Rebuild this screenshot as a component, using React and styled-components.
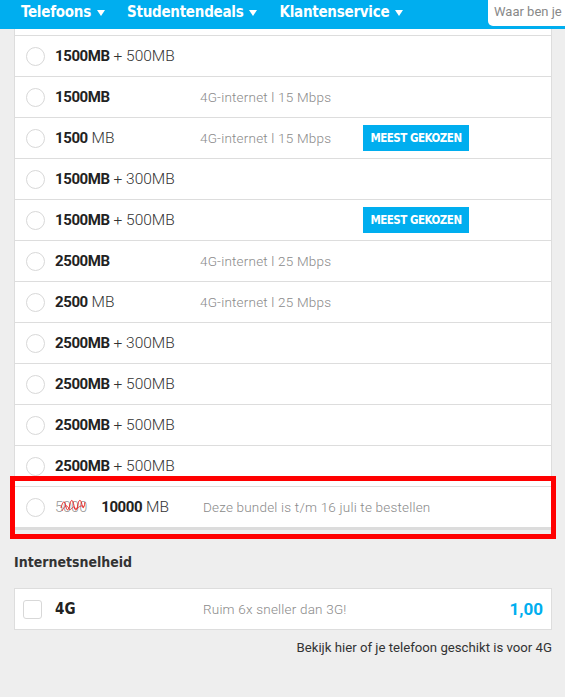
import styled, { createGlobalStyle } from "styled-components";

const GlobalStyle = createGlobalStyle`
  html, body {
    margin: 0;
    padding: 0;
    background: #eeeeee;
    font-family: Roboto, "Liberation Sans", sans-serif;
  }
  * { box-sizing: border-box; }
`;

const Page = styled.div`
  width: 565px;
  height: 697px;
  overflow: hidden;
  background: #eeeeee;
  position: relative;
`;

// top navigation bar
const Header = styled.header`
  height: 29px;
  background: #00aeef;
  display: flex;
  align-items: flex-start;
`;

const Nav = styled.nav`
  display: flex;
  align-items: center;
  height: 24px;
  flex: 1;
  margin-left: -9px;
`;

const NavItem = styled.span`
  display: flex;
  align-items: center;
  gap: 6px;
  margin-right: 22px;
  color: #fff;
  font-family: "DejaVu Sans Condensed", "DejaVu Sans", sans-serif;
  font-stretch: condensed;
  font-weight: bold;
  font-size: 15px;
  letter-spacing: -0.25px;
`;

const Caret = styled.span`
  width: 0;
  height: 0;
  border-left: 4.5px solid transparent;
  border-right: 4.5px solid transparent;
  border-top: 6px solid #fff;
  margin-top: 2px;
`;

const Search = styled.div`
  width: 77px;
  height: 26px;
  background: #fff;
  border-bottom-left-radius: 5px;
  padding: 4px 0 0 6px;
  color: #888;
  font-size: 13px;
  white-space: nowrap;
  overflow: hidden;
`;

const Content = styled.main`
  padding: 0 13px 0 14px;
`;

// list of bundles
const List = styled.div`
  background: #fff;
  border-left: 1px solid #dddddd;
  border-right: 1px solid #dddddd;
  border-bottom: 3px solid #dcdcdc;
`;

const TopStub = styled.div`
  height: 7px;
  border-bottom: 1px solid #dddddd;
`;

const Row = styled.div`
  height: 41px;
  display: grid;
  grid-template-columns: 40px 145px 163px auto;
  align-items: center;
  border-bottom: 1px solid #dddddd;
  &:last-child { border-bottom: none; height: 40px; }
`;

const Radio = styled.span`
  width: 19px;
  height: 19px;
  margin-left: 11px;
  border-radius: 50%;
  border: 1px solid #d8d8d8;
  background: #fff;
`;

const Label = styled.span`
  font-size: 15.5px;
  font-weight: 300;
  color: #333;
  white-space: nowrap;
  b {
    color: #222;
    font-weight: 700;
    font-size: 15px;
    letter-spacing: -0.4px;
  }
`;

const Desc = styled.span`
  font-size: 13.5px;
  font-weight: 300;
  letter-spacing: 0.2px;
  color: #8a8a8a;
  white-space: nowrap;
  padding-left: ${(p) => (p.shift ? "3px" : "0")};
`;

const Badge = styled.span`
  justify-self: start;
  background: #00aeef;
  color: #fff;
  height: 26px;
  width: 106px;
  display: flex;
  align-items: center;
  justify-content: center;
  font-family: "DejaVu Sans Condensed", "DejaVu Sans", sans-serif;
  font-stretch: condensed;
  font-weight: bold;
  font-size: 11.5px;
  letter-spacing: -0.5px;
`;

const Old = styled.span`
  position: relative;
  color: #999;
  font-size: 14.5px;
  font-weight: 300;
  margin-right: 14px;
`;

const Scribble = styled.svg`
  position: absolute;
  left: 5px;
  top: -4px;
  width: 26px;
  height: 20px;
`;

// speed section
const SectionTitle = styled.h3`
  margin: 24px 0 0 0;
  height: 16px;
  font-family: "DejaVu Sans Condensed", "DejaVu Sans", sans-serif;
  font-stretch: condensed;
  font-weight: bold;
  font-size: 14px;
  color: #333;
`;

const SpeedBox = styled.div`
  margin-top: 18px;
  height: 42px;
  background: #fff;
  border: 1px solid #dddddd;
  display: grid;
  grid-template-columns: 40px 148px 1fr auto;
  align-items: center;
  padding-right: 8px;
`;

const Check = styled.span`
  width: 19px;
  height: 19px;
  margin-left: 8px;
  border-radius: 3px;
  border: 1px solid #d8d8d8;
`;

const SpeedName = styled.span`
  font-family: "DejaVu Sans Condensed", "DejaVu Sans", sans-serif;
  font-stretch: condensed;
  font-weight: bold;
  font-size: 15px;
  color: #222;
`;

const Price = styled.span`
  color: #00aeef;
  font-weight: 700;
  font-size: 17px;
`;

const Note = styled.p`
  margin: 10px 0 0 0;
  text-align: right;
  font-size: 13.2px;
  color: #333;
`;

const Highlight = styled.div`
  position: absolute;
  left: 10px;
  top: 476px;
  width: 546px;
  height: 63px;
  border: 5px solid #ff0000;
`;

const bundles = [
  { main: "1500MB", extra: "+ 500MB" },
  { main: "1500MB", desc: "4G-internet l 15 Mbps" },
  { main: "1500", extra: "MB", desc: "4G-internet l 15 Mbps", badge: true },
  { main: "1500MB", extra: "+ 300MB" },
  { main: "1500MB", extra: "+ 500MB", badge: true },
  { main: "2500MB", desc: "4G-internet l 25 Mbps" },
  { main: "2500", extra: "MB", desc: "4G-internet l 25 Mbps" },
  { main: "2500MB", extra: "+ 300MB" },
  { main: "2500MB", extra: "+ 500MB" },
  { main: "2500MB", extra: "+ 500MB" },
  { main: "2500MB", extra: "+ 500MB" },
];

export default function App() {
  return (
    <Page>
      <GlobalStyle />
      <Header>
        <Nav>
          <NavItem><Caret /></NavItem>
          <NavItem>Telefoons <Caret /></NavItem>
          <NavItem>Studentendeals <Caret /></NavItem>
          <NavItem>Klantenservice <Caret /></NavItem>
        </Nav>
        <Search>Waar ben je</Search>
      </Header>

      <Content>
        <List>
          <TopStub />
          {bundles.map((b, i) => (
            <Row key={i}>
              <Radio />
              <Label>
                <b>{b.main}</b> {b.extra}
              </Label>
              <Desc>{b.desc}</Desc>
              {b.badge ? <Badge>MEEST GEKOZEN</Badge> : <span />}
            </Row>
          ))}
          <Row>
            <Radio />
            <Label>
              <Old>
                5000
                <Scribble viewBox="0 0 26 20">
                  <path
                    d="M1 13 C3 5 5 5 6 12 C7 17 9 15 10 9 C11 4 13 4 14 11 C15 17 17 16 18 9 C19 4 21 4 22 10 C23 15 24 13 25 7"
                    fill="none"
                    stroke="#e01010"
                    strokeWidth="0.9"
                  />
                  <path
                    d="M2 16 C5 10 7 9 9 14 C11 17 13 9 15 13 C17 16 20 8 24 12"
                    fill="none"
                    stroke="#e01010"
                    strokeWidth="0.7"
                  />
                </Scribble>
              </Old>
              <b>10000</b> MB
            </Label>
            <Desc shift>Deze bundel is t/m 16 juli te bestellen</Desc>
            <span />
          </Row>
        </List>

        <SectionTitle>Internetsnelheid</SectionTitle>
        <SpeedBox>
          <Check />
          <SpeedName>4G</SpeedName>
          <Desc>Ruim 6x sneller dan 3G!</Desc>
          <Price>1,00</Price>
        </SpeedBox>
        <Note>Bekijk hier of je telefoon geschikt is voor 4G</Note>
      </Content>

      <Highlight />
    </Page>
  );
}
